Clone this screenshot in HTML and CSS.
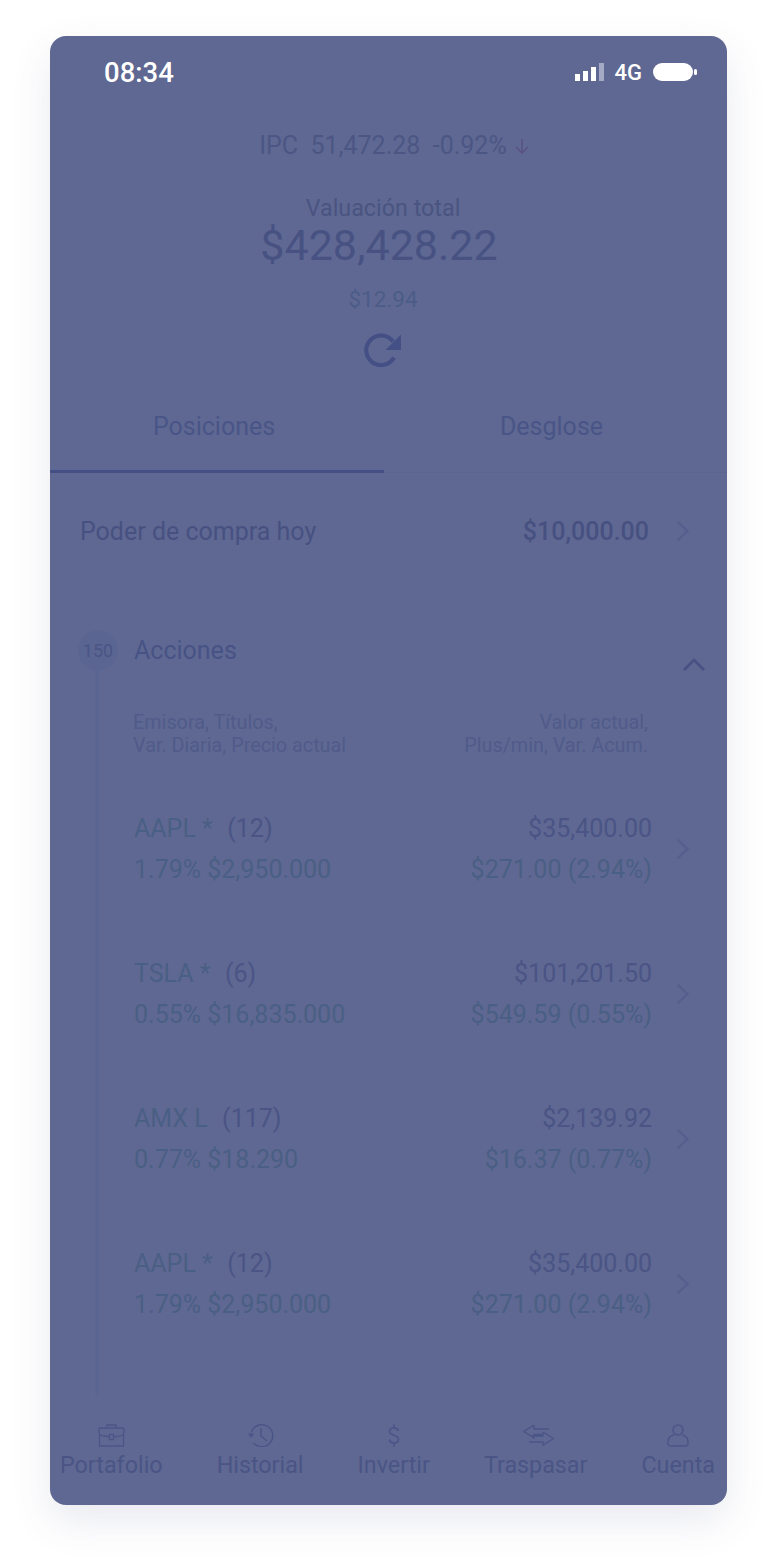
FILE: index.html
```html
<!DOCTYPE html>
<html lang="es">
<head>
<meta charset="utf-8">
<title>Portafolio</title>
<link rel="stylesheet" href="styles.css">
</head>
<body>
<main class="phone">
  <header class="status">
    <span class="time">08:34</span>
    <div class="status-right">
      <svg class="signal" width="29" height="18" viewBox="0 0 29 18"><rect x="0" y="11" width="5" height="7" fill="#fff"/><rect x="8" y="8" width="5" height="10" fill="#fff"/><rect x="16" y="4" width="5" height="14" fill="#fff"/><rect x="24" y="0" width="5" height="18" fill="#a5aac4"/></svg>
      <span class="net">4G</span>
      <svg class="battery" width="44" height="18" viewBox="0 0 44 18"><rect x="0" y="0" width="40" height="18" rx="9" fill="#fff"/><rect x="41" y="6" width="3" height="6" rx="1.500" fill="#fff"/></svg>
    </div>
  </header>

  <section class="summary">
    <div class="ipc">
      <span class="ipc-text">IPC&nbsp; 51,472.28&nbsp; -0.92%</span>
      <svg class="ipc-arrow" width="16" height="20" viewBox="0 0 16 20"><path d="M8 3v14M2 11l6 6 6-6" fill="none" stroke="#5a5180" stroke-width="1.400"/></svg>
    </div>
    <div class="val-label">Valuación total</div>
    <div class="val-total">$428,428.22</div>
    <div class="val-change">$12.94</div>
    <svg class="refresh" width="38" height="38" viewBox="0 0 38 38"><path d="M30 24.500A14.800 14.800 0 1 1 29 8.500" fill="none" stroke="#434f85" stroke-width="4"/><path d="M37 1.500V17H21.500Z" fill="#434f85"/></svg>
  </section>

  <nav class="tabs">
    <div class="tab tab-active">Posiciones</div>
    <div class="tab">Desglose</div>
  </nav>

  <section class="power">
    <span class="power-label">Poder de compra hoy</span>
    <span class="power-value">$10,000.00</span>
    <svg class="chev" width="16" height="24" viewBox="0 0 16 24"><path d="M2.500 2.500 12.500 12l-10 9.500" fill="none" stroke="#545f8e" stroke-width="2.200"/></svg>
  </section>

  <section class="group">
    <div class="group-head">
      <span class="badge">150</span>
      <span class="group-title">Acciones</span>
      <svg class="chev-up" width="24" height="16" viewBox="0 0 24 16"><path d="M2 14 12 4l10 10" fill="none" stroke="#475183" stroke-width="2.800"/></svg>
    </div>
    <div class="group-body">
      <div class="legend">
        <div>Emisora, Títulos,<br>Var. Diaria, Precio actual</div>
        <div class="legend-right">Valor actual,<br>Plus/min, Var. Acum.</div>
      </div>

      <article class="row">
        <div class="row-main">
          <div class="line"><span class="sym">AAPL *&nbsp; <span class="qty">(12)</span></span><span class="amt">$35,400.00</span></div>
          <div class="line"><span>1.79% $2,950.000</span><span>$271.00 (2.94%)</span></div>
        </div>
        <svg class="chev" width="16" height="24" viewBox="0 0 16 24"><path d="M2.500 2.500 12.500 12l-10 9.500" fill="none" stroke="#545f8e" stroke-width="2.200"/></svg>
      </article>
      <article class="row">
        <div class="row-main">
          <div class="line"><span class="sym">TSLA *&nbsp; <span class="qty">(6)</span></span><span class="amt">$101,201.50</span></div>
          <div class="line"><span>0.55% $16,835.000</span><span>$549.59 (0.55%)</span></div>
        </div>
        <svg class="chev" width="16" height="24" viewBox="0 0 16 24"><path d="M2.500 2.500 12.500 12l-10 9.500" fill="none" stroke="#545f8e" stroke-width="2.200"/></svg>
      </article>
      <article class="row">
        <div class="row-main">
          <div class="line"><span class="sym">AMX L&nbsp; <span class="qty">(117)</span></span><span class="amt">$2,139.92</span></div>
          <div class="line"><span>0.77% $18.290</span><span>$16.37 (0.77%)</span></div>
        </div>
        <svg class="chev" width="16" height="24" viewBox="0 0 16 24"><path d="M2.500 2.500 12.500 12l-10 9.500" fill="none" stroke="#545f8e" stroke-width="2.200"/></svg>
      </article>
      <article class="row">
        <div class="row-main">
          <div class="line"><span class="sym">AAPL *&nbsp; <span class="qty">(12)</span></span><span class="amt">$35,400.00</span></div>
          <div class="line"><span>1.79% $2,950.000</span><span>$271.00 (2.94%)</span></div>
        </div>
        <svg class="chev" width="16" height="24" viewBox="0 0 16 24"><path d="M2.500 2.500 12.500 12l-10 9.500" fill="none" stroke="#545f8e" stroke-width="2.200"/></svg>
      </article>
    </div>
  </section>

  <footer class="bottom">
    <div class="nav-item">
      <svg width="27" height="23" viewBox="0 0 27 23" fill="none" stroke="#4b5688" stroke-width="1.300"><path d="M9 4V1h9v3M2 4h23a1 1 0 0 1 1 1v4c0 2.500-3 3.500-10.500 3.500M11.500 12.500C4 12.500 1 11.500 1 9V5a1 1 0 0 1 1-1M1.500 9v13h24V9M11.500 10.500h4v5h-4z"/></svg>
      <span>Portafolio</span>
    </div>
    <div class="nav-item nav-historial">
      <svg width="26" height="23" viewBox="0 0 26 23" fill="none" stroke="#4b5688" stroke-width="1.500"><path d="M3.200 8.500A11 11 0 1 1 5.500 19"/><path d="M0 9.500h6.500L3 14z" fill="#4b5688" stroke="none"/><path d="M13 4v8l6 5"/></svg>
      <span>Historial</span>
    </div>
    <div class="nav-item">
      <svg width="12" height="23" viewBox="0 0 12 23" fill="none" stroke="#4b5688" stroke-width="1.800"><path d="M10.500 7C10 4.800 8.200 3.800 6 3.800 3.500 3.800 1.500 5 1.500 7.300c0 4.700 9 3.200 9 8 0 2.400-2 3.700-4.500 3.700-2.300 0-4.200-1.200-4.600-3.500M6 .5v3.300M6 19v3.500"/></svg>
      <span>Invertir</span>
    </div>
    <div class="nav-item nav-traspasar">
      <svg width="32" height="23" viewBox="0 0 32 23" fill="none" stroke="#4b5688" stroke-width="1.300"><path d="M11 1 1 7.500 11 14v-3.500h8M11 1v4h15M20 8l10.500 6.500L20 21v-3H6M20 8v4H7"/></svg>
      <span>Traspasar</span>
    </div>
    <div class="nav-item">
      <svg width="22" height="23" viewBox="0 0 22 23" fill="none" stroke="#4b5688" stroke-width="1.500"><circle cx="11" cy="6" r="5"/><path d="M7 11C3 12 1 14 1 17.500v2A2.500 2.500 0 0 0 3.500 22h15a2.500 2.500 0 0 0 2.500-2.500v-2C21 14 19 12 15 11"/></svg>
      <span>Cuenta</span>
    </div>
  </footer>
</main>
</body>
</html>
```

FILE: styles.css
```css
* { box-sizing: border-box; }
html, body { margin: 0; padding: 0; background: #fff; }
body {
  width: 774px;
  height: 1565px;
  padding: 36px 47px 60px 50px;
  font-family: Roboto, "Liberation Sans", sans-serif;
  overflow: hidden;
}
.phone {
  width: 677px;
  height: 1469px;
  background: #5f6892;
  border-radius: 16px;
  box-shadow: 0 16px 40px rgba(70, 80, 130, 0.12);
  display: flex;
  flex-direction: column;
  overflow: hidden;
}
.status {
  height: 72px;
  flex: none;
  padding: 0 30px 0 54px;
  display: flex;
  justify-content: space-between;
  align-items: center;
}
.time { color: #fff; font-size: 27.500px; font-weight: 500; }
.status-right { display: flex; align-items: center; gap: 11px; }
.net { color: #fff; font-size: 22px; font-weight: 500; }
.signal, .battery { display: block; }

.summary { display: flex; flex-direction: column; align-items: center; padding: 20px 11px 0 0; }
.ipc { display: flex; align-items: center; height: 34px; color: #4c5684; font-size: 25px; position: relative; }
.ipc-arrow { position: absolute; left: 100%; top: 8px; margin-left: 7px; }
.val-label { margin-top: 32px; font-size: 23.300px; line-height: 28px; color: #4a5481; }
.val-total { font-size: 43px; line-height: 50px; color: #475283; margin: -2px 8px 0 0; }
.val-change { margin-top: 15px; font-size: 22.500px; line-height: 28px; color: #4c5c88; }
.refresh { margin-top: 20px; display: block; }

.tabs { display: flex; flex: none; margin-top: 26px; height: 76px; border-bottom: 1px solid #5b648f; }
.tab { font-size: 25px; color: #495587; text-align: center; padding-top: 15px; }
.tab:first-child { width: 334px; padding-right: 6px; }
.tab:last-child { flex: 1; padding-right: 8px; }
.tab-active { border-bottom: 3px solid #434f85; height: 76px; }

.power {
  display: flex;
  flex: none;
  align-items: center;
  height: 116px;
  margin-bottom: 31px;
  padding: 0 36px 0 30px;
  font-size: 25px;
  color: #475181;
}
.power-label { flex: 1; }
.power-value { font-weight: 500; margin-right: 26px; }

.group { display: flex; flex-direction: column; }
.group-head { display: flex; align-items: center; height: 60px; padding-left: 28px; position: relative; }
.badge {
  width: 40px; height: 40px; border-radius: 50%;
  background: #5b6592; color: #4a5585;
  font-size: 18px; display: flex; align-items: center; justify-content: center;
}
.group-title { margin-left: 16px; font-size: 25px; color: #475385; }
.chev-up { position: absolute; right: 21px; top: 36px; }
.group-body { margin: -10px 0 0 45px; padding: 10px 0 0 34px; border-left: 4px solid #5b6592; height: 725px; }
.legend {
  display: flex; justify-content: space-between;
  padding: 31px 79px 0 0;
  font-size: 19.800px; line-height: 23px; color: #505b8a;
  height: 115px;
}
.legend-right { text-align: right; }
.row { display: flex; align-items: center; height: 145px; padding: 22px 36px 60px 1px; }
.row-main { flex: 1; margin-right: 23px; }
.line { display: flex; justify-content: space-between; font-size: 25px; line-height: 41px; color: #4a5f84; }
.qty, .amt { color: #4a5485; }
.qty { margin-left: 2px; }
.chev { display: block; flex: none; }

.bottom {
  display: flex;
  justify-content: space-between;
  flex: none;
  margin-top: auto;
  height: 92px;
  padding: 11px 12px 0 10px;
  font-size: 23.300px;
  color: #4a5585;
}
.nav-item { display: flex; flex-direction: column; align-items: center; }
.nav-item svg { display: block; margin-bottom: 2px; flex: none; }
.nav-item span { line-height: 32px; }
.nav-historial svg { margin-left: 2px; }
.nav-traspasar svg { margin-left: 6px; }
```
